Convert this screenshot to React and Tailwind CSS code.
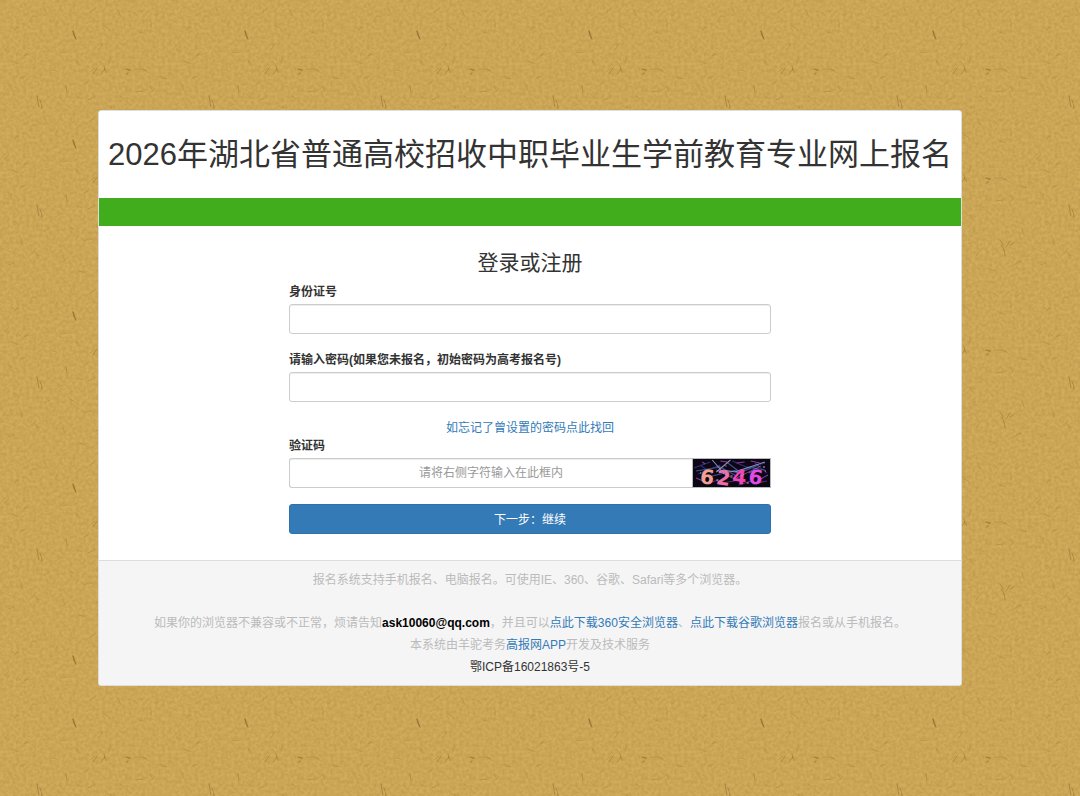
const FLECKS = [
  ["M73 31q1 5 3 8", 0.6, 1.3],
  ["M126 69l4 1M127 74l1-1", 0.45, 1.3],
  ["M37 96l2 11M40 100q2 4 2 8", 0.4, 1],
  ["M66 86l1 6M104 66q0 4 3 7M101 74l4-5M97 68l-4 6", 0.35, 1],
  ["M141 136q4 3 4 11M146 138l4-6M140 131l3 5M150 136l5-3", 0.35, 1],
  ["M4 50l4-3M12 61l5 2M20 78l6-2M24 56l4-2M8 84q4 2 3 6", 0.22, 1],
  ["M30 18q3-3 6-2M44 9l3 4M58 20q-3 3-2 7M14 30l4-3", 0.22, 1],
  ["M90 12l5-3M104 26q4 1 6 5M118 10l2 5M72 14l3-2", 0.22, 1],
  ["M140 32l6 2M150 20q2 4 1 7M161 12l-4 3M134 12l3 3", 0.22, 1],
  ["M90 72l5-4M110 56q1 4-1 7M98 50q3-2 4-6M134 70q8-3 14 2", 0.25, 1],
  ["M60 52q4 2 8 0M52 70l5 1M76 60l3 5M84 84l4-2", 0.2, 1],
  ["M136 92l7-1M150 86l3 5M160 76q3 3 7 3M120 96l4 3", 0.22, 1],
  ["M76 96l6 3M88 100q4-1 7-4M110 106l3 5M56 108l4-3", 0.2, 1],
  ["M14 112l5 4M20 128q3 4 2 8M44 122l6-3M34 142l4 5M8 156l6-2", 0.22, 1],
  ["M70 118l5 3M84 132q4-3 8-2M62 146l3 6M96 150l6-3M78 162l5 1", 0.22, 1],
  ["M112 124l4-4M120 142l-4 5M130 160l6 2M154 156q3-4 7-4M162 120l2 6", 0.22, 1],
];

function PaperDefs() {
  return (
    <svg className="absolute h-0 w-0" aria-hidden="true">
      <defs>
        <filter id="grain" x="0" y="0" width="100%" height="100%" colorInterpolationFilters="sRGB">
          <feTurbulence type="fractalNoise" baseFrequency="0.3" numOctaves="3" seed="8" stitchTiles="stitch" />
          <feColorMatrix values="0 0 0 0 0.55  0 0 0 0 0.39  0 0 0 0 0.14  0.38 0 0 0 -0.09" />
        </filter>
        <pattern id="paper" width="172" height="172" patternUnits="userSpaceOnUse">
          <rect width="172" height="172" fill="#d2ad5c" />
          <rect width="172" height="172" filter="url(#grain)" />
          {FLECKS.map(([d, opacity, width]) => (
            <path key={d} d={d} fill="none" stroke="#7b5420" strokeWidth={width} strokeOpacity={opacity} strokeLinecap="round" />
          ))}
        </pattern>
      </defs>
    </svg>
  );
}

function PaperTexture() {
  return (
    <svg className="absolute inset-0 h-full w-full" aria-hidden="true">
      <rect width="100%" height="100%" fill="url(#paper)" />
    </svg>
  );
}

const DIGITS = [
  ["6", 8, 26, "#f0a090", 8],
  ["2", 24, 27, "#ee6fa8", 8],
  ["4", 40, 26, "#ee45b8", 6],
  ["6", 56, 26, "#e04ae8", 10],
];

function Captcha() {
  return (
    <svg viewBox="0 0 78 30" className="block h-full w-full overflow-visible" role="img" aria-label="验证码图片" preserveAspectRatio="none">
      <rect width="78" height="30" fill="#0b0714" />
      <g fill="none" strokeWidth="1">
        <path d="M2 10l16-6M6 16l22-9M8 7l12 9M40 3l18 8M50 12l22-7M62 5l12 10" stroke="#2f2f78" />
        <path d="M4 13l24-4M26 8l18 10M34 4l12 9M54 9l18 3M16 19l28-7M44 16l22-9" stroke="#46508f" />
        <path d="M20 2l12 14M24 14L38 2M30 12l20 3M42 14l30-10" stroke="#8f90bd" />
        <path d="M10 4l3 2M28 3l7 1M44 5l8-1M58 3l9 2M56 15l6-3M4 20l7 3M66 22l9-5" stroke="#8a3a98" />
        <path d="M14 26l12-4M30 25l12-2M46 27l12-4M60 26l14-3" stroke="#59306e" />
      </g>
      <g fontFamily="'DejaVu Sans', sans-serif" fontSize="20" fontWeight="700">
        {DIGITS.map(([digit, x, y, fill, angle]) => (
          <text key={x} x={x} y={y} fill={fill} transform={`rotate(${angle} ${x + 7} ${y - 7})`}>
            {digit}
          </text>
        ))}
      </g>
      <path d="M24 12l18 9M44 20l24-12" stroke="#c79fd8" strokeWidth="0.7" strokeOpacity="0.7" />
      <path d="M8 15h1M24 22h2M38 18h2M54 25h2M72 13h1M70 9h2M33 8h1" stroke="#d7a5dd" strokeWidth="1" />
      <rect x="0.5" y="0.5" width="77" height="29" fill="none" stroke="#b9b9b9" />
    </svg>
  );
}

const field =
  "h-[30px] w-full rounded-[3px] border border-[#ccc] bg-white px-3 text-xs text-[#555] shadow-[inset_0_1px_1px_rgba(0,0,0,0.075)] outline-none focus:border-[#66afe9]";
const label = "mb-[3px] block pt-px text-xs leading-[18px] font-bold";
const link = "text-[#337ab7] hover:underline";

export default function App() {
  return (
    <div className="relative min-h-screen bg-[#cba553] py-[109px] font-['Liberation_Sans','Noto_Sans_CJK_SC',sans-serif] text-xs text-[#333]">
      <PaperDefs />
      <PaperTexture />
      <div className="relative pt-px pr-[38px] pl-[18px]">
        <PaperTexture />
        <main className="relative mx-auto w-full max-w-[864px] overflow-hidden rounded-[3px] border border-[#ddd] bg-white">
          <header className="px-2 py-5 text-center">
            <h1 className="text-[31px] leading-[47px]">2026年湖北省普通高校招收中职毕业生学前教育专业网上报名</h1>
          </header>
          <div className="h-7 bg-[#41ad1c]" />
          <form className="mx-auto w-full max-w-[482px] pt-6 pb-[26px]" onSubmit={(e) => e.preventDefault()}>
            <h2 className="mb-1.5 text-center text-[21px] leading-[26px]">登录或注册</h2>
            <label className={label} htmlFor="idcard">身份证号</label>
            <input id="idcard" type="text" className={field} />
            <label className={`${label} mt-4`} htmlFor="password">请输入密码(如果您未报名，初始密码为高考报名号)</label>
            <input id="password" type="password" className={field} />
            <p className="mt-[18px] text-center leading-4">
              <a href="#forgot" className={link}>如忘记了曾设置的密码点此找回</a>
            </p>
            <label className={label} htmlFor="captcha">验证码</label>
            <div className="flex">
              <input
                id="captcha"
                type="text"
                placeholder="请将右侧字符输入在此框内"
                className="h-[30px] min-w-0 flex-1 rounded-l-[3px] border border-r-0 border-[#ccc] bg-white px-3 text-center text-xs text-[#555] shadow-[inset_0_1px_1px_rgba(0,0,0,0.075)] outline-none placeholder:text-[#999]"
              />
              <button type="button" className="h-[30px] w-[79px]" aria-label="换一张验证码">
                <Captcha />
              </button>
            </div>
            <button type="submit" className="mt-4 h-[30px] w-full rounded-[3px] border border-[#2e72ad] bg-[#337ab7] pt-px text-xs text-white hover:bg-[#286090]">
              下一步：继续
            </button>
          </form>
          <footer className="border-t border-[#ddd] bg-[#f5f5f5] px-4 pt-2 pb-[7px] text-center leading-[22px] text-[#bbb]">
            <p>报名系统支持手机报名、电脑报名。可使用IE、360、谷歌、Safari等多个浏览器。</p>
            <p className="mt-[21px]">
              如果你的浏览器不兼容或不正常，烦请告知<b className="text-black">ask10060@qq.com</b>，并且可以
              <a href="#browser-360" className={link}>点此下载360安全浏览器</a>、
              <a href="#browser-chrome" className={link}>点此下载谷歌浏览器</a>报名或从手机报名。
            </p>
            <p>
              本系统由羊驼考务<a href="#app" className={link}>高报网APP</a>开发及技术服务
            </p>
            <p>
              <a href="#icp" className="text-[#333] hover:underline">鄂ICP备16021863号-5</a>
            </p>
          </footer>
        </main>
      </div>
    </div>
  );
}
